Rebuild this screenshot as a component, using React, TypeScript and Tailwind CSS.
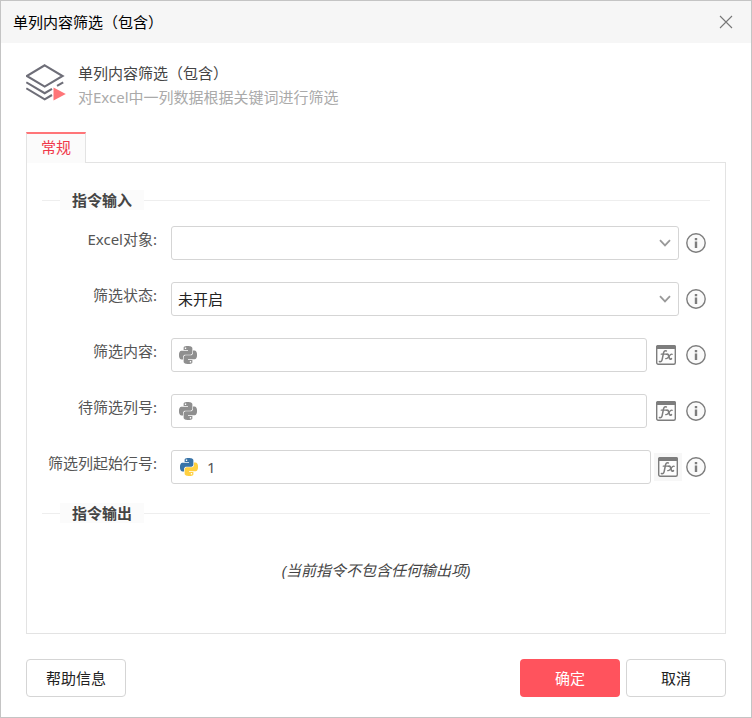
import React, { useState } from 'react';
import clsx from 'clsx';

const PY_TOP =
  'M14.25.18l.9.2.73.26.59.3.45.32.34.34.25.34.16.33.1.3.04.26.02.2-.01.13V8.5l-.05.63-.13.55-.21.46-.26.38-.3.31-.33.25-.35.19-.35.14-.33.1-.3.07-.26.04-.21.02H8.77l-.69.05-.59.14-.5.22-.41.27-.33.32-.27.35-.2.36-.15.37-.1.35-.07.32-.04.27-.02.21v3.06H3.17l-.21-.03-.28-.07-.32-.12-.35-.18-.36-.26-.36-.36-.35-.46-.32-.59-.28-.73-.21-.88-.14-1.05-.05-1.23.06-1.22.16-1.04.24-.87.32-.71.36-.57.4-.44.42-.33.42-.24.4-.16.36-.1.32-.05.24-.01h.16l.06.01h8.16v-.83H6.18l-.01-2.75-.02-.37.05-.34.11-.31.17-.28.25-.26.31-.23.38-.2.44-.18.51-.15.58-.12.64-.1.71-.06.77-.04.84-.02 1.27.05zm-6.3 1.98l-.23.33-.08.41.08.41.23.34.33.22.41.09.41-.09.33-.22.23-.34.08-.41-.08-.41-.23-.33-.33-.22-.41-.09-.41.09z';
const PY_BOTTOM =
  'M21.04 6.11l.28.06.32.12.35.18.36.27.36.35.35.47.32.59.28.73.21.88.14 1.04.05 1.23-.06 1.23-.16 1.04-.24.86-.32.71-.36.57-.4.45-.42.33-.42.24-.4.16-.36.09-.32.05-.24.02-.16-.01h-8.22v.82h5.84l.01 2.76.02.36-.05.34-.11.31-.17.29-.25.25-.31.24-.38.2-.44.17-.51.15-.58.13-.64.09-.71.07-.77.04-.84.01-1.27-.04-1.07-.14-.9-.2-.73-.25-.59-.3-.45-.33-.34-.34-.25-.34-.16-.33-.1-.3-.04-.25-.02-.2.01-.13v-5.34l.05-.64.13-.54.21-.46.26-.38.3-.32.33-.24.35-.2.35-.14.33-.1.3-.06.26-.04.21-.02.13-.01h5.84l.69-.05.59-.14.5-.21.41-.28.33-.32.27-.35.2-.36.15-.36.1-.35.07-.32.04-.28.02-.21V6.07h2.09l.14.01zm-6.47 14.25l-.23.33-.08.41.08.41.23.33.33.23.41.08.41-.08.33-.23.23-.33.08-.41-.08-.41-.23-.33-.33-.23-.41-.08-.41.08z';

const PythonIcon: React.FC<{ active?: boolean }> = ({ active }) => (
  <svg viewBox="0 0 24 24" className="w-[18px] h-[18px] shrink-0" aria-hidden="true">
    <path d={PY_TOP} fill={active ? '#3974a8' : '#8f8f8f'} />
    <path d={PY_BOTTOM} fill={active ? '#ffd040' : '#8f8f8f'} />
  </svg>
);

const LayersIcon = () => (
  <svg viewBox="0 0 40 42" className="w-10 h-[42px] shrink-0" aria-hidden="true">
    <g fill="none" stroke="#6e6e78" strokeWidth="2.1">
      <path d="M18.7 1.3 36.6 12 18.7 22.6.8 12z" />
      <path d="M.3 18.3 18.7 29.2 26 24.9" />
      <path d="M31 21.9 37.2 18.3" />
      <path d="M.3 24.3 18.7 35.3 26 31" />
    </g>
    <path d="M27.5 23.5v13L39.8 30z" fill="#ff7578" />
  </svg>
);

const InfoButton: React.FC<{ label: string }> = ({ label }) => (
  <button type="button" aria-label={`${label}说明`} className="w-5 h-5 shrink-0">
    <svg viewBox="0 0 20 20" className="w-5 h-5">
      <circle cx="10" cy="10" r="9.2" fill="#fafafa" stroke="#7d7d7d" strokeWidth="1.4" />
      <path d="M8.8 5h2.4v2.2H8.8zM8.8 8.6h2.4V15H8.8z" fill="#7d7d7d" />
    </svg>
  </button>
);

const FxButton: React.FC<{ highlighted?: boolean }> = ({ highlighted }) => (
  <button
    type="button"
    aria-label="编辑表达式"
    className={clsx(
      'w-7 h-7 shrink-0 flex items-center justify-center',
      highlighted ? 'ml-[3px] mr-1 bg-[#f7f7f7]' : 'ml-[5px] mr-1.5'
    )}
  >
    <svg viewBox="0 0 20 20" className="w-5 h-5">
      <rect x="0.7" y="0.7" width="18.6" height="18.6" rx="1.5" fill="#fdfdfd" stroke="#7d7d7d" strokeWidth="1.4" />
      <path d="M0 4V2a2 2 0 0 1 2-2h16a2 2 0 0 1 2 2v2z" fill="#7d7d7d" />
      <g fill="none" stroke="#7d7d7d" strokeLinecap="round">
        <path d="M10.4 6c-1.7-.8-2.5.3-2.9 2L6.2 14.4c-.4 1.9-1.4 2.7-2.8 2.1" strokeWidth="1.5" />
        <path d="M5.2 9.2h4.8" strokeWidth="1.2" />
        <path d="M10.6 9.2c1.2-.5 1.7.3 2.1 1.8l.5 1.8c.4 1.4 1.1 1.6 2.2.9" strokeWidth="1.7" />
        <path d="M16.2 9.3c-1.5-.5-2.2.7-3.2 2.1s-1.8 2.7-3.3 2.2" strokeWidth="1.3" />
      </g>
    </svg>
  </button>
);

const SectionTitle: React.FC<{ children: React.ReactNode }> = ({ children }) => (
  <div className="flex items-center">
    <span className="w-[18px] h-px bg-[#eeeeee]" />
    <h2 className="w-[84px] h-5 pl-3 bg-[#fbfbfb] font-bold leading-5 text-[#444]">{children}</h2>
    <span className="flex-1 h-px bg-[#eeeeee]" />
  </div>
);

interface FieldRowProps {
  id: string;
  label: string;
  children: React.ReactNode;
}

const FieldRow: React.FC<FieldRowProps> = ({ id, label, children }) => (
  <div className="flex items-center pr-1">
    <label htmlFor={id} className="w-[115px] mr-3.5 pb-2 shrink-0 text-right whitespace-nowrap text-[#555]">
      {label}:
    </label>
    {children}
    <InfoButton label={label} />
  </div>
);

const SelectBox: React.FC<{ id: string; options: string[] }> = ({ id, options }) => (
  <div className="relative flex-1 min-w-0 mr-[7px]">
    <select
      id={id}
      className="block w-full h-[34px] pl-1.5 pr-8 appearance-none bg-white border border-[#d5d5d5] rounded-[3px] text-[#222] outline-none"
    >
      {options.map((o) => (
        <option key={o}>{o}</option>
      ))}
    </select>
    <svg viewBox="0 0 12 8" className="absolute right-2 top-[13px] w-3 h-2 pointer-events-none" aria-hidden="true">
      <path d="M1 1.2 6 6.4 11 1.2" fill="none" stroke="#999" strokeWidth="1.8" />
    </svg>
  </div>
);

interface ExprInputProps {
  id: string;
  initial?: string;
  active?: boolean;
}

const ExprInput: React.FC<ExprInputProps> = ({ id, initial = '', active }) => {
  const [value, setValue] = useState(initial);

  return (
    <>
      <div
        className={clsx(
          'flex-1 min-w-0 h-[34px] flex items-center bg-white border border-[#d5d5d5] rounded-[3px]',
          active ? 'pl-2' : 'pl-[7px]'
        )}
      >
        <PythonIcon active={active} />
        <input
          id={id}
          type="text"
          value={value}
          onChange={(e) => setValue(e.target.value)}
          className="flex-1 min-w-0 h-full pl-[9px] bg-transparent text-[#555] outline-none"
        />
      </div>
      <FxButton highlighted={active} />
    </>
  );
};

const App = () => (
  <div className="min-h-screen flex flex-col bg-white border border-[#c4c4c4] text-[15px] leading-5 font-['Noto_Sans','Noto_Sans_CJK_SC',sans-serif]">
    <header className="h-[42px] pl-3 pr-[18px] flex items-center justify-between bg-[#f6f6f6]">
      <h1 className="text-black">单列内容筛选（包含）</h1>
      <button type="button" aria-label="关闭">
        <svg viewBox="0 0 14 14" className="w-3.5 h-3.5">
          <path d="M1 1 13 13M13 1 1 13" fill="none" stroke="#777" strokeWidth="1.1" />
        </svg>
      </button>
    </header>

    <main className="flex-1 flex flex-col px-[25px] pt-[18px] pb-5">
      <div className="flex items-center">
        <LayersIcon />
        <div className="pl-3 leading-6">
          <p className="text-[#444]">单列内容筛选（包含）</p>
          <p className="text-[#aaa]">对Excel中一列数据根据关键词进行筛选</p>
        </div>
      </div>

      <div role="tablist" className="flex mt-[23px]">
        <button
          type="button"
          role="tab"
          aria-selected="true"
          className="relative w-[60px] h-[31px] pb-1 -mb-px bg-[#fbfbfb] border-x border-[#e3e3e3] border-t-2 border-t-[#ff7578] text-[#f0384a]"
        >
          常规
        </button>
      </div>

      <div role="tabpanel" className="flex-1 flex flex-col px-[15px] pt-[27px] border border-[#e3e3e3]">
        <SectionTitle>指令输入</SectionTitle>
        <div className="flex flex-col gap-[22px] pt-4 pb-[19px]">
          <FieldRow id="excel" label="Excel对象">
            <SelectBox id="excel" options={['']} />
          </FieldRow>
          <FieldRow id="state" label="筛选状态">
            <SelectBox id="state" options={['未开启', '已开启']} />
          </FieldRow>
          <FieldRow id="content" label="筛选内容">
            <ExprInput id="content" />
          </FieldRow>
          <FieldRow id="column" label="待筛选列号">
            <ExprInput id="column" />
          </FieldRow>
          <FieldRow id="startRow" label="筛选列起始行号">
            <ExprInput id="startRow" initial="1" active />
          </FieldRow>
        </div>
        <SectionTitle>指令输出</SectionTitle>
        <p className="pt-[37px] text-center italic text-[#444]">(当前指令不包含任何输出项)</p>
      </div>

      <footer className="flex gap-1.5 pt-[25px]">
        <button type="button" className="w-[100px] h-[38px] mr-auto bg-white border border-[#d5d5d5] rounded text-[#222]">
          帮助信息
        </button>
        <button type="button" className="w-[100px] h-[38px] bg-[#ff535d] rounded text-white">
          确定
        </button>
        <button type="button" className="w-[100px] h-[38px] bg-white border border-[#d5d5d5] rounded text-[#222]">
          取消
        </button>
      </footer>
    </main>
  </div>
);

export default App;
